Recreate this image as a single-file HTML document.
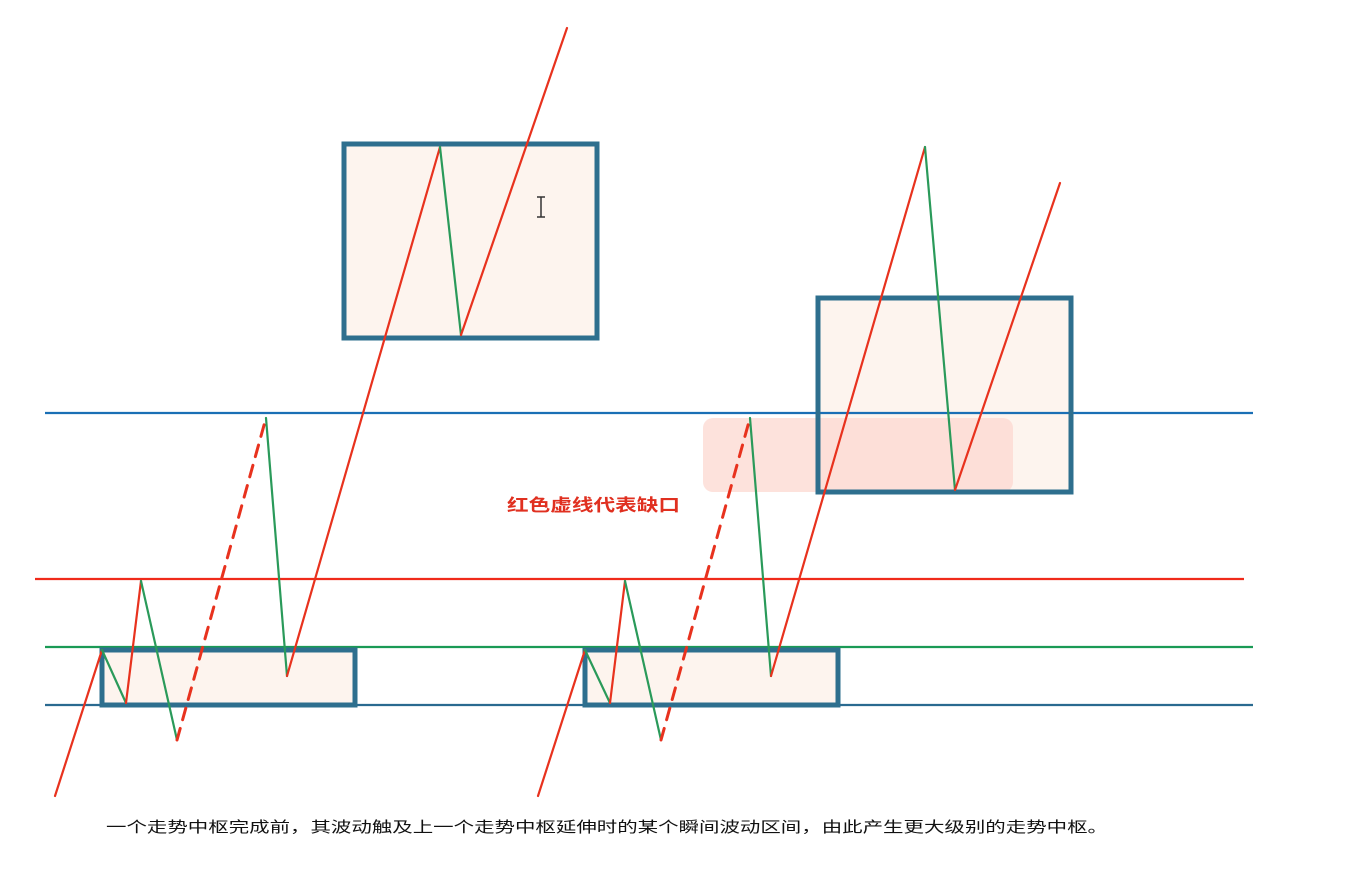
<!DOCTYPE html>
<html><head><meta charset="utf-8"><style>
html,body{margin:0;padding:0;background:#fff;}
svg{display:block}
</style></head><body>
<svg width="1358" height="885" viewBox="0 0 1358 885" xmlns="http://www.w3.org/2000/svg">
<rect width="1358" height="885" fill="#fff"/>
<rect x="344" y="144" width="253" height="194" fill="#fdf4ee"/>
<rect x="818" y="298" width="253" height="194" fill="#fdf4ee"/>
<rect x="703" y="418" width="310" height="74" rx="10" fill="#fcd8d0" opacity="0.75"/>
<rect x="102" y="650" width="253" height="55" fill="#fdf4ee"/>
<rect x="585" y="650" width="253" height="55" fill="#fdf4ee"/>
<line x1="45" y1="413" x2="1253" y2="413" stroke="#1a6fb5" stroke-width="2.2"/>
<line x1="35" y1="579" x2="1244" y2="579" stroke="#f02a1a" stroke-width="2.2"/>
<line x1="45" y1="647" x2="1253" y2="647" stroke="#1a9a55" stroke-width="2.2"/>
<line x1="45" y1="705" x2="1253" y2="705" stroke="#2a6a90" stroke-width="2.2"/>
<g fill="none" stroke="#2e6f8e" stroke-width="5">
<rect x="344" y="144" width="253" height="194"/>
<rect x="818" y="298" width="253" height="194"/>
<rect x="102" y="650" width="253" height="55"/>
<rect x="585" y="650" width="253" height="55"/>
</g>
<g stroke-width="2.2" fill="none" stroke-linecap="round">
<line x1="55" y1="796" x2="102" y2="650" stroke="#e8321e"/>
<line x1="102" y1="650" x2="126" y2="703" stroke="#2a9a5a"/>
<line x1="126" y1="703" x2="141" y2="581" stroke="#e8321e"/>
<line x1="141" y1="581" x2="177" y2="740" stroke="#2a9a5a"/>
<line x1="177" y1="740" x2="266" y2="418" stroke="#e8321e" stroke-width="3" stroke-dasharray="12,9"/>
<line x1="266" y1="418" x2="287" y2="676" stroke="#2a9a5a"/>
<line x1="287" y1="676" x2="440" y2="147" stroke="#e8321e"/>
<line x1="440" y1="147" x2="461" y2="335" stroke="#2a9a5a"/>
<line x1="461" y1="335" x2="567" y2="28" stroke="#e8321e"/>
<line x1="538" y1="796" x2="585" y2="650" stroke="#e8321e"/>
<line x1="585" y1="650" x2="610" y2="703" stroke="#2a9a5a"/>
<line x1="610" y1="703" x2="625" y2="581" stroke="#e8321e"/>
<line x1="625" y1="581" x2="661" y2="740" stroke="#2a9a5a"/>
<line x1="661" y1="740" x2="750" y2="418" stroke="#e8321e" stroke-width="3" stroke-dasharray="12,9"/>
<line x1="750" y1="418" x2="771" y2="676" stroke="#2a9a5a"/>
<line x1="771" y1="676" x2="925" y2="147" stroke="#e8321e"/>
<line x1="925" y1="147" x2="955" y2="490" stroke="#2a9a5a"/>
<line x1="955" y1="490" x2="1060" y2="183" stroke="#e8321e"/>
</g>
<g stroke="#333" stroke-width="1.5" fill="none">
<line x1="541" y1="197" x2="541" y2="217"/>
<line x1="537" y1="197" x2="545" y2="197"/>
<line x1="537" y1="217" x2="545" y2="217"/>
</g>
<text x="507" y="511" textLength="173" lengthAdjust="spacingAndGlyphs" font-family="Liberation Sans, 'Noto Sans CJK SC', sans-serif" font-size="17" font-weight="bold" fill="#e03020">红色虚线代表缺口</text>
<text x="106" y="832" textLength="1002" lengthAdjust="spacingAndGlyphs" font-family="Liberation Sans, 'Noto Sans CJK SC', sans-serif" font-size="15" fill="#111">一个走势中枢完成前，其波动触及上一个走势中枢延伸时的某个瞬间波动区间，由此产生更大级别的走势中枢。</text>
</svg>
</body></html>
